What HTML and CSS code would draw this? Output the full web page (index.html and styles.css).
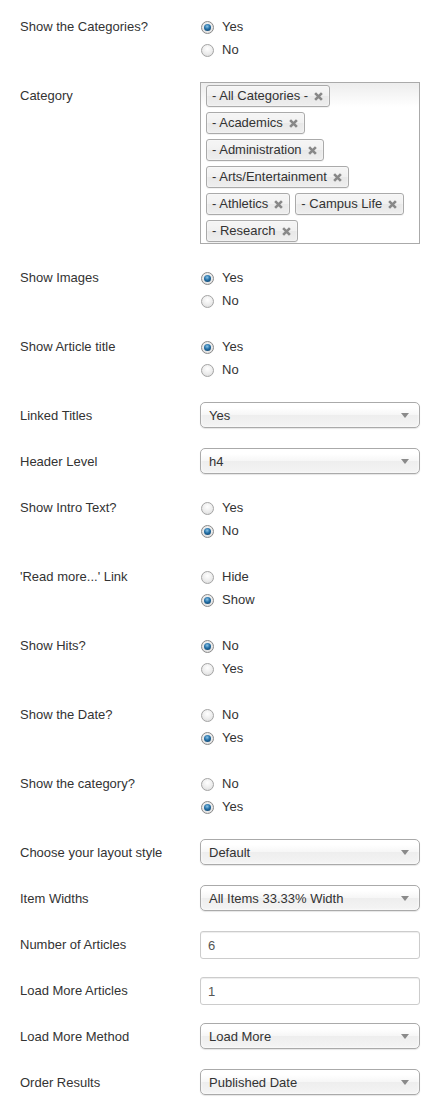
FILE: index.html
```html
<!DOCTYPE html>
<html>
<head>
<meta charset="utf-8">
<link rel="stylesheet" href="styles.css">
</head>
<body>
<form class="form">
  <div class="row">
    <div class="lbl">Show the Categories?</div>
    <div class="radios">
      <div class="radio"><span class="rb on"></span>Yes</div>
      <div class="radio"><span class="rb"></span>No</div>
    </div>
  </div>

  <div class="row">
    <div class="lbl">Category</div>
    <div class="multi">
      <span class="tag">- All Categories -<svg class="x" viewBox="0 0 8 8"><path d="M1 1L7 7M7 1L1 7"/></svg></span>
      <span class="tag">- Academics<svg class="x" viewBox="0 0 8 8"><path d="M1 1L7 7M7 1L1 7"/></svg></span>
      <span class="tag">- Administration<svg class="x" viewBox="0 0 8 8"><path d="M1 1L7 7M7 1L1 7"/></svg></span>
      <span class="tag">- Arts/Entertainment<svg class="x" viewBox="0 0 8 8"><path d="M1 1L7 7M7 1L1 7"/></svg></span>
      <span class="tag">- Athletics<svg class="x" viewBox="0 0 8 8"><path d="M1 1L7 7M7 1L1 7"/></svg></span>
      <span class="tag">- Campus Life<svg class="x" viewBox="0 0 8 8"><path d="M1 1L7 7M7 1L1 7"/></svg></span>
      <span class="tag">- Research<svg class="x" viewBox="0 0 8 8"><path d="M1 1L7 7M7 1L1 7"/></svg></span>
    </div>
  </div>

  <div class="row">
    <div class="lbl">Show Images</div>
    <div class="radios">
      <div class="radio"><span class="rb on"></span>Yes</div>
      <div class="radio"><span class="rb"></span>No</div>
    </div>
  </div>

  <div class="row">
    <div class="lbl">Show Article title</div>
    <div class="radios">
      <div class="radio"><span class="rb on"></span>Yes</div>
      <div class="radio"><span class="rb"></span>No</div>
    </div>
  </div>

  <div class="row">
    <div class="lbl">Linked Titles</div>
    <div class="select">Yes<span class="arrow"></span></div>
  </div>

  <div class="row">
    <div class="lbl">Header Level</div>
    <div class="select">h4<span class="arrow"></span></div>
  </div>

  <div class="row">
    <div class="lbl">Show Intro Text?</div>
    <div class="radios">
      <div class="radio"><span class="rb"></span>Yes</div>
      <div class="radio"><span class="rb on"></span>No</div>
    </div>
  </div>

  <div class="row">
    <div class="lbl">'Read more...' Link</div>
    <div class="radios">
      <div class="radio"><span class="rb"></span>Hide</div>
      <div class="radio"><span class="rb on"></span>Show</div>
    </div>
  </div>

  <div class="row">
    <div class="lbl">Show Hits?</div>
    <div class="radios">
      <div class="radio"><span class="rb on"></span>No</div>
      <div class="radio"><span class="rb"></span>Yes</div>
    </div>
  </div>

  <div class="row">
    <div class="lbl">Show the Date?</div>
    <div class="radios">
      <div class="radio"><span class="rb"></span>No</div>
      <div class="radio"><span class="rb on"></span>Yes</div>
    </div>
  </div>

  <div class="row">
    <div class="lbl">Show the category?</div>
    <div class="radios">
      <div class="radio"><span class="rb"></span>No</div>
      <div class="radio"><span class="rb on"></span>Yes</div>
    </div>
  </div>

  <div class="row">
    <div class="lbl">Choose your layout style</div>
    <div class="select">Default<span class="arrow"></span></div>
  </div>

  <div class="row">
    <div class="lbl">Item Widths</div>
    <div class="select">All Items 33.33% Width<span class="arrow"></span></div>
  </div>

  <div class="row row-input">
    <div class="lbl">Number of Articles</div>
    <div class="input">6</div>
  </div>

  <div class="row row-input">
    <div class="lbl">Load More Articles</div>
    <div class="input">1</div>
  </div>

  <div class="row">
    <div class="lbl">Load More Method</div>
    <div class="select">Load More<span class="arrow"></span></div>
  </div>

  <div class="row">
    <div class="lbl">Order Results</div>
    <div class="select">Published Date<span class="arrow"></span></div>
  </div>
</form>
</body>
</html>
```

FILE: styles.css
```css
html, body {
  margin: 0;
  padding: 0;
  background: #fff;
}

body {
  font-family: "Liberation Sans", Arial, sans-serif;
  font-size: 13px;
  color: #333;
}

.form {
  padding: 13px 0 0 20px;
}

.row {
  display: grid;
  grid-template-columns: 180px 220px;
  align-items: start;
  margin-bottom: 20px;
}

.row-input {
  margin-bottom: 18px;
}

.lbl {
  padding-top: 5px;
  line-height: 18px;
  white-space: nowrap;
}

.radios {
  display: flex;
  flex-direction: column;
  gap: 5px;
  padding: 5px 0 3px;
}

.radio {
  display: flex;
  align-items: center;
  height: 18px;
  line-height: 18px;
}

.rb {
  box-sizing: border-box;
  width: 13px;
  height: 13px;
  border-radius: 50%;
  border: 1px solid #a4a4a4;
  background: radial-gradient(circle at 50% 35%, #ffffff 0%, #ececec 55%, #d6d6d6 100%);
  margin: 0 8px 0 1px;
  position: relative;
  flex: none;
}

.rb.on {
  border-color: #8a8a8a;
  background: radial-gradient(circle at 50% 35%, #f6f6f6 0%, #dcdcdc 100%);
}

.rb.on::after {
  content: "";
  position: absolute;
  left: 2px;
  top: 2px;
  width: 7px;
  height: 7px;
  border-radius: 50%;
  background: radial-gradient(circle at 45% 35%, #8cc4e6 0%, #236fa6 45%, #0b3558 100%);
}

.multi {
  box-sizing: border-box;
  height: 162px;
  border: 1px solid #aaa;
  background: linear-gradient(#eee 1%, #fff 15%);
  padding: 2px 5px 0;
  display: flex;
  flex-wrap: wrap;
  align-content: flex-start;
  row-gap: 5px;
  column-gap: 5px;
}

.tag {
  box-sizing: border-box;
  height: 22px;
  line-height: 20px;
  padding: 0 6px 0 5px;
  border: 1px solid #aaa;
  border-radius: 3px;
  background: linear-gradient(#f4f4f4 20%, #f0f0f0 50%, #e8e8e8 52%, #eee 100%);
  box-shadow: 0 0 2px #fff inset, 0 1px 0 rgba(0, 0, 0, 0.05);
  color: #333;
  display: inline-flex;
  align-items: center;
  white-space: nowrap;
}

.x {
  width: 9px;
  height: 9px;
  margin-left: 6px;
  fill: none;
  stroke: #888;
  stroke-width: 2.3;
}

.select {
  box-sizing: border-box;
  height: 26px;
  border: 1px solid #aaa;
  border-radius: 5px;
  background: linear-gradient(#fff 20%, #f6f6f6 50%, #eee 52%, #f4f4f4 100%);
  box-shadow: 0 0 3px #fff inset, 0 1px 1px rgba(0, 0, 0, 0.1);
  padding-left: 8px;
  display: flex;
  align-items: center;
  color: #333;
  position: relative;
  white-space: nowrap;
}

.arrow {
  position: absolute;
  right: 10px;
  top: 10px;
  width: 0;
  height: 0;
  border-left: 4px solid transparent;
  border-right: 4px solid transparent;
  border-top: 5px solid #8a8a8a;
}

.input {
  box-sizing: border-box;
  height: 28px;
  border: 1px solid #ccc;
  border-radius: 3px;
  box-shadow: inset 0 1px 1px rgba(0, 0, 0, 0.075);
  padding-left: 7px;
  display: flex;
  align-items: center;
  color: #555;
  background: #fff;
}
```
